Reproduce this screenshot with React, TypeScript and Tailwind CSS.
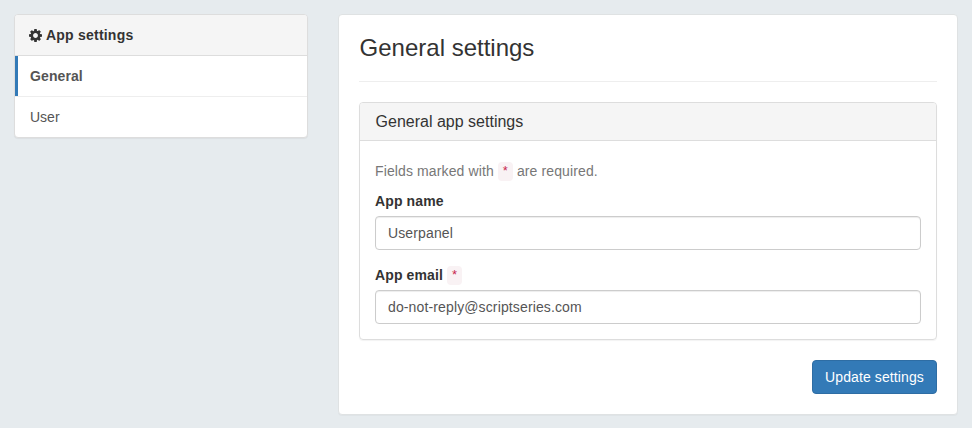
import React from "react";

function Gear() {
  return (
    <svg viewBox="0 128 1536 1536" className="mr-[4px] -ml-px size-[13px]" fill="currentColor" aria-hidden="true">
      <path d="M1054 896q0-118-84-202t-202-84-202 84-84 202 84 202 202 84 202-84 84-202zm482-109v222q0 12-8 23t-20 13l-185 28q-19 54-39 91 35 50 107 138 10 12 10 25t-9 23q-27 37-99 108t-94 71q-12 0-26-9l-138-108q-44 23-91 38-16 136-29 186-7 28-36 28h-222q-14 0-24.5-8.5t-11.5-21.5l-28-184q-49-16-90-37l-141 107q-10 9-25 9-14 0-25-11-126-114-165-168-7-10-7-23 0-12 8-23 15-21 51-66.5t54-70.5q-27-50-41-99l-183-27q-13-2-21-12.5t-8-23.5v-222q0-12 8-23t19-13l186-28q14-46 39-92-40-57-107-138-10-12-10-24 0-10 9-23 26-36 98.5-107.5t94.5-71.5q13 0 26 10l138 107q44-23 91-38 16-136 29-186 7-28 36-28h222q14 0 24.5 8.5t11.5 21.5l28 184q49 16 90 37l142-107q9-9 24-9 13 0 25 10 129 119 165 170 7 8 7 22 0 12-8 23-15 21-51 66.5t-54 70.5q26 50 41 98l183 28q13 2 21 12.5t8 23.5z" />
    </svg>
  );
}

function Star() {
  return (
    <code className="-mt-1 inline-block h-[19px] w-[15px] rounded bg-[#f9f2f4] text-center align-[1px] font-['Liberation_Mono',monospace] text-[12.6px] leading-[20px] font-normal tracking-normal text-[#c7254e]">*</code>
  );
}

function Field({ label, value, required }: { label: string; value: string; required?: boolean }) {
  return (
    <div>
      <label className="mb-[5px] block h-5 font-bold tracking-[0.12px] text-[#333]">
        {label} {required && <Star />}
      </label>
      <input
        defaultValue={value}
        className="block h-[34px] w-full rounded border border-[#ccc] bg-white px-3 text-[14px] tracking-[0.13px] text-[#555] shadow-[inset_0_1px_1px_rgba(0,0,0,0.075)] outline-none"
      />
    </div>
  );
}

export default function App() {
  return (
    <div className="flex h-[428px] w-[972px] items-start bg-[#e6ebee] pl-[14px] pt-[14px] font-['Liberation_Sans',Arial,sans-serif] text-[14px] leading-5 text-[#333]">
      <nav className="w-[294px] overflow-hidden rounded border border-[#ddd] bg-white shadow-[0_1px_1px_rgba(0,0,0,0.05)]">
        <div className="flex h-[41px] items-center border-b border-[#ddd] bg-[#f5f5f5] pl-[15px] font-bold tracking-[0.22px]">
          <Gear />
          App settings
        </div>
        <div className="flex h-[41px] border-b border-[#eee] font-bold tracking-[0.1px] text-[#555]">
          <span className="w-[3px] bg-[#337ab7]" />
          <span className="pl-3 leading-10">General</span>
        </div>
        <div className="flex h-10 items-center pl-[15px] text-[#555]">User</div>
      </nav>
      <main className="ml-[30px] h-[401px] w-[620px] rounded border border-[#dfe2e3] bg-white px-5 pt-[18px] shadow-[0_1px_1px_rgba(0,0,0,0.03)]">
        <h1 className="h-[49px] border-b border-[#eee] pl-[0.6px] text-[24px] leading-[30px]">General settings</h1>
        <section className="mt-5 h-[238px] rounded border border-[#ddd] shadow-[0_1px_1px_rgba(0,0,0,0.05)]">
          <h2 className="h-[38px] rounded-t-[3px] border-b border-[#ddd] bg-[#f5f5f5] px-[15.6px] text-[16px] leading-[37px]">General app settings</h2>
          <div className="px-[15px] pt-5">
            <p className="mb-[10px] h-5 tracking-[0.12px] text-[#777]">Fields marked with <Star /> are required.</p>
            <div className="flex flex-col gap-[15px]">
              <Field label="App name" value="Userpanel" />
              <Field label="App email" value="do-not-reply@scriptseries.com" required />
            </div>
          </div>
        </section>
        <div className="mt-5 flex justify-end">
          <button className="h-[34px] w-[125px] rounded border border-[#2e6da4] bg-[#337ab7] tracking-[0.1px] text-white">Update settings</button>
        </div>
      </main>
    </div>
  );
}
